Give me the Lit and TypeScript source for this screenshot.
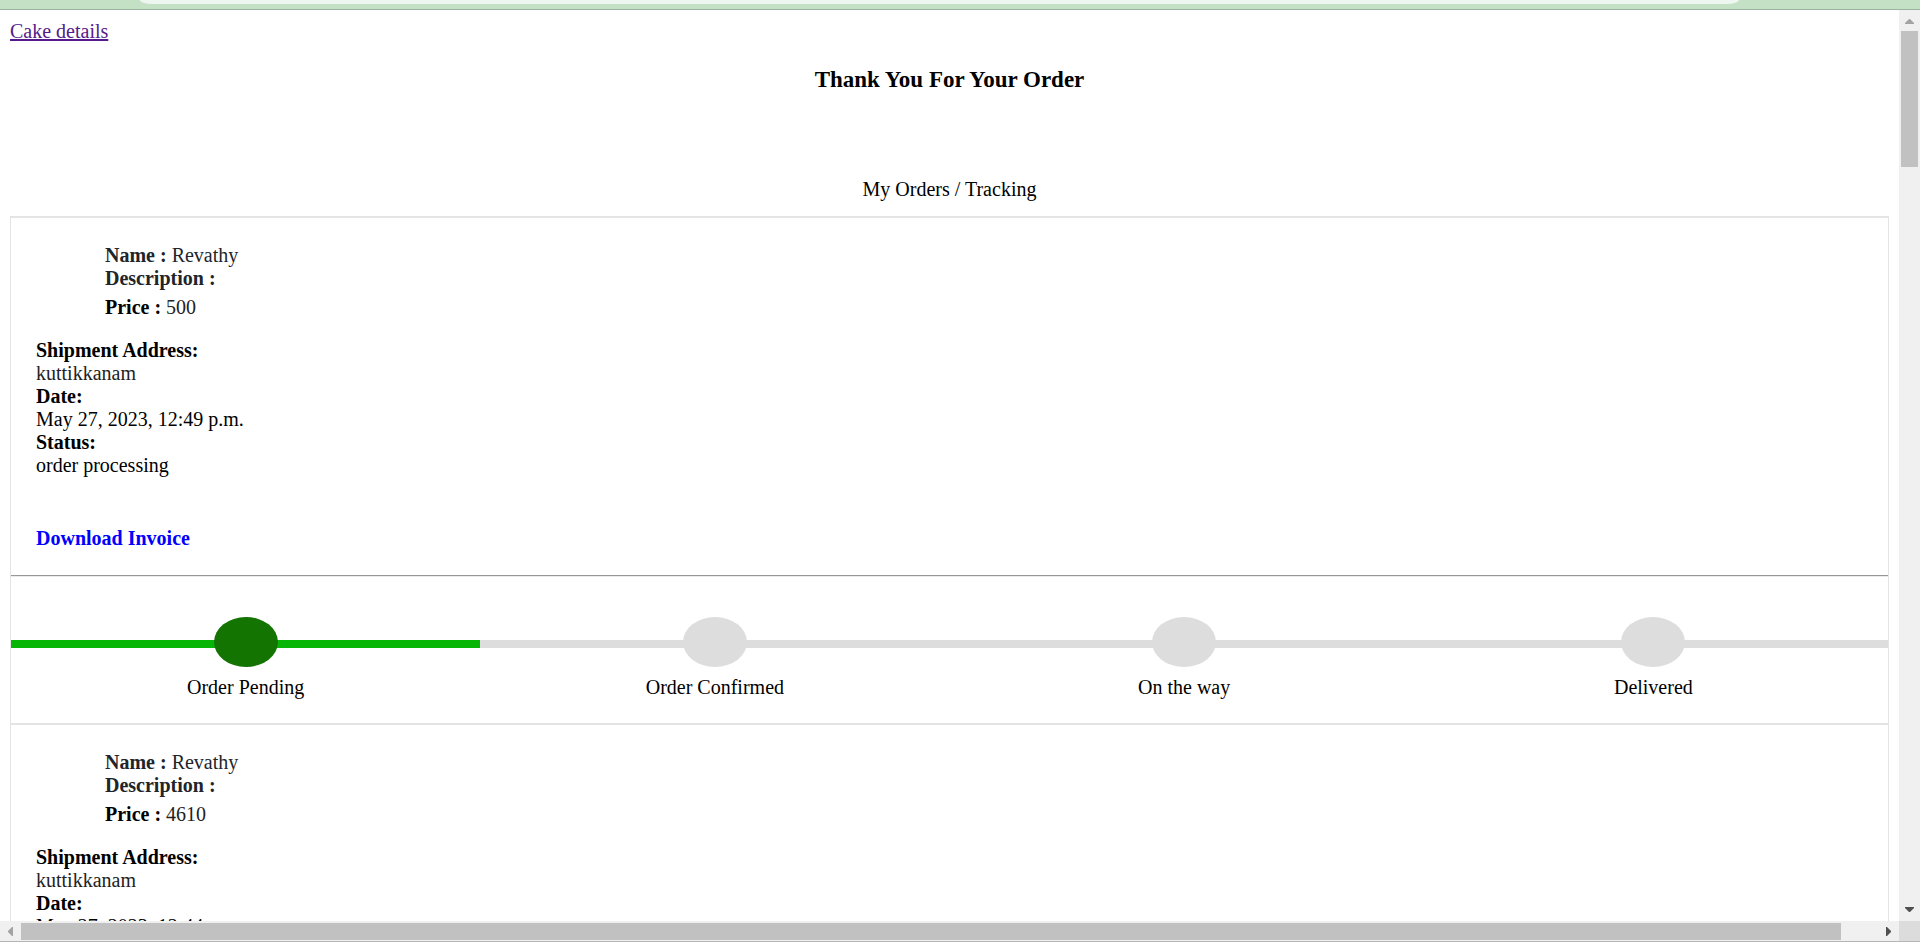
import { LitElement, html, css } from "lit";
import { customElement, property } from "lit/decorators.js";

interface Order {
  name: string;
  description: string;
  price: number;
  address: string;
  date: string;
  status: string;
  reached: number;
}

const STEPS = ["Order Pending", "Order Confirmed", "On the way", "Delivered"];

const ORDERS: Order[] = [
  {
    name: "Revathy",
    description: "",
    price: 500,
    address: "kuttikkanam",
    date: "May 27, 2023, 12:49 p.m.",
    status: "order processing",
    reached: 1,
  },
  {
    name: "Revathy",
    description: "",
    price: 4610,
    address: "kuttikkanam",
    date: "May 27, 2023, 12:44 p.m.",
    status: "order processing",
    reached: 1,
  },
];

@customElement("order-progress")
class OrderProgress extends LitElement {
  @property({ type: Number }) reached = 0;

  static styles = css`
    :host {
      display: block;
    }
    .steps {
      display: grid;
      grid-template-columns: repeat(4, 1fr);
      margin: 0;
      padding: 40px 0 24px;
      list-style: none;
    }
    .step {
      display: grid;
      grid-template-rows: 50px auto;
      row-gap: 9px;
      text-align: center;
    }
    .track,
    .dot {
      grid-area: 1 / 1;
      background: #dddddd;
    }
    .track {
      height: 8px;
      margin-top: 23px;
    }
    .dot {
      width: 64px;
      height: 50px;
      border-radius: 50%;
      justify-self: center;
    }
    .done .track {
      background: #07b507;
    }
    .done .dot {
      background: #147401;
    }
  `;

  render() {
    return html`<ol class="steps">
      ${STEPS.map(
        (label, i) => html`<li class="step ${i < this.reached ? "done" : ""}">
          <span class="track"></span>
          <span class="dot"></span>
          <span>${label}</span>
        </li>`
      )}
    </ol>`;
  }
}

@customElement("order-card")
class OrderCard extends LitElement {
  @property({ attribute: false }) order!: Order;

  static styles = css`
    :host {
      display: block;
      border: 1px solid #e4e4e4;
      border-top-width: 2px;
      border-bottom: 0;
    }
    .body {
      padding: 26px 25px 25px;
    }
    .product {
      margin: 0 0 20px 69px;
    }
    .product p,
    .shipment {
      margin: 0;
    }
    .product .info {
      color: #212529;
    }
    .product .price {
      margin-top: 6px;
    }
    .shipment {
      margin-bottom: 50px;
    }
    dt {
      font-weight: bold;
    }
    dd {
      margin: 0;
    }
    .value {
      color: #222222;
    }
    .invoice {
      display: block;
      width: fit-content;
      color: #0000ff;
      font-weight: bold;
      text-decoration: none;
    }
    .rule {
      margin: 0;
      border: 0;
      border-top: 1px solid #979797;
      border-bottom: 1px solid #ececec;
    }
  `;

  render() {
    const o = this.order;
    return html`
      <div class="body">
        <div class="product">
          <p class="info"><b>Name :</b> ${o.name}</p>
          <p class="info"><b>Description :</b> ${o.description}</p>
          <p class="price"><b>Price :</b> <span class="value">${o.price}</span></p>
        </div>
        <dl class="shipment">
          <dt>Shipment Address:</dt>
          <dd class="value">${o.address}</dd>
          <dt>Date:</dt>
          <dd>${o.date}</dd>
          <dt>Status:</dt>
          <dd>${o.status}</dd>
        </dl>
        <a class="invoice" href="#invoice">Download Invoice</a>
      </div>
      <hr class="rule" />
      <order-progress .reached=${o.reached}></order-progress>
    `;
  }
}

@customElement("scroll-bar")
class ScrollBar extends LitElement {
  @property({ reflect: true }) direction: "vertical" | "horizontal" = "vertical";
  @property({ type: Number }) extent = 100;

  static styles = css`
    :host {
      display: flex;
      background: #f0f0f0;
    }
    :host([direction="vertical"]) {
      flex-direction: column;
    }
    .arrow {
      flex: none;
      display: grid;
      place-items: center;
      box-sizing: border-box;
      width: 21px;
      height: 21px;
      padding: 0;
      border: 0;
      background: none;
      color: #505050;
    }
    :host([direction="horizontal"]) .arrow {
      height: 20px;
    }
    :host([direction="vertical"]) .arrow:first-of-type {
      padding-top: 2px;
    }
    :host([direction="vertical"]) .arrow:last-of-type {
      padding-bottom: 2px;
    }
    .arrow:disabled {
      color: #a3a3a3;
    }
    .arrow svg {
      display: block;
      fill: currentColor;
    }
    .track {
      flex: 1;
      display: flex;
      min-width: 0;
      min-height: 0;
      padding: 0 2px;
    }
    :host([direction="horizontal"]) .track {
      padding: 2px 0 1px;
    }
    .thumb {
      background: #c1c1c1;
      flex: 1;
    }
    :host([direction="horizontal"]) .thumb {
      flex: none;
    }
  `;

  render() {
    const vertical = this.direction === "vertical";
    const size = vertical ? `height:${this.extent}%` : `width:${this.extent}%`;
    return html`
      <button class="arrow" disabled aria-label=${vertical ? "Scroll up" : "Scroll left"}>
        ${vertical
          ? html`<svg width="9" height="5" viewBox="0 0 9 5"><path d="M0 5V4L4 0H5L9 4V5Z" /></svg>`
          : html`<svg width="5" height="9" viewBox="0 0 5 9"><path d="M5 0H4L0 4V5L4 9H5Z" /></svg>`}
      </button>
      <div class="track"><div class="thumb" style=${size}></div></div>
      <button class="arrow" aria-label=${vertical ? "Scroll down" : "Scroll right"}>
        ${vertical
          ? html`<svg width="9" height="5" viewBox="0 0 9 5"><path d="M0 0V1L4 5H5L9 1V0Z" /></svg>`
          : html`<svg width="5" height="9" viewBox="0 0 5 9"><path d="M0 0H1L5 4V5L1 9H0Z" /></svg>`}
      </button>
    `;
  }
}

@customElement("app-root")
class AppRoot extends LitElement {
  static styles = css`
    :host {
      display: grid;
      grid-template-columns: minmax(0, 1fr) 21px;
      grid-template-rows: 10px minmax(0, 1fr) 20px;
      box-sizing: border-box;
      height: 100vh;
      overflow: hidden;
      border-bottom: 1px solid #b5b5b5;
      background: #ffffff;
      color: #000000;
      font: 20px/23px "Liberation Serif", "Times New Roman", serif;
    }
    .toolbar {
      grid-column: 1 / -1;
      box-sizing: border-box;
      padding: 0 181px 0 140px;
      border-bottom: 1px solid #9bb59d;
      background: #c5e1c5;
    }
    .field {
      height: 4px;
      border-radius: 0 0 12px 12px / 0 0 4px 4px;
      background: #edf6ef;
    }
    .page {
      overflow: hidden;
      padding: 10px;
    }
    .back {
      color: #551a8b;
    }
    .top {
      display: flex;
    }
    .title {
      margin: 23px 0 85px;
      font-size: 23px;
      line-height: 27px;
      text-align: center;
    }
    .subtitle {
      margin: 0 0 15px;
      text-align: center;
    }
    .corner {
      background: #dcdcdc;
    }
  `;

  render() {
    return html`
      <div class="toolbar"><div class="field"></div></div>
      <main class="page">
        <nav class="top"><a class="back" href="#cake">Cake details</a></nav>
        <h3 class="title">Thank You For Your Order</h3>
        <p class="subtitle">My Orders / Tracking</p>
        ${ORDERS.map((order) => html`<order-card .order=${order}></order-card>`)}
      </main>
      <scroll-bar direction="vertical" .extent=${15.65}></scroll-bar>
      <scroll-bar direction="horizontal" .extent=${98}></scroll-bar>
      <div class="corner"></div>
    `;
  }
}
